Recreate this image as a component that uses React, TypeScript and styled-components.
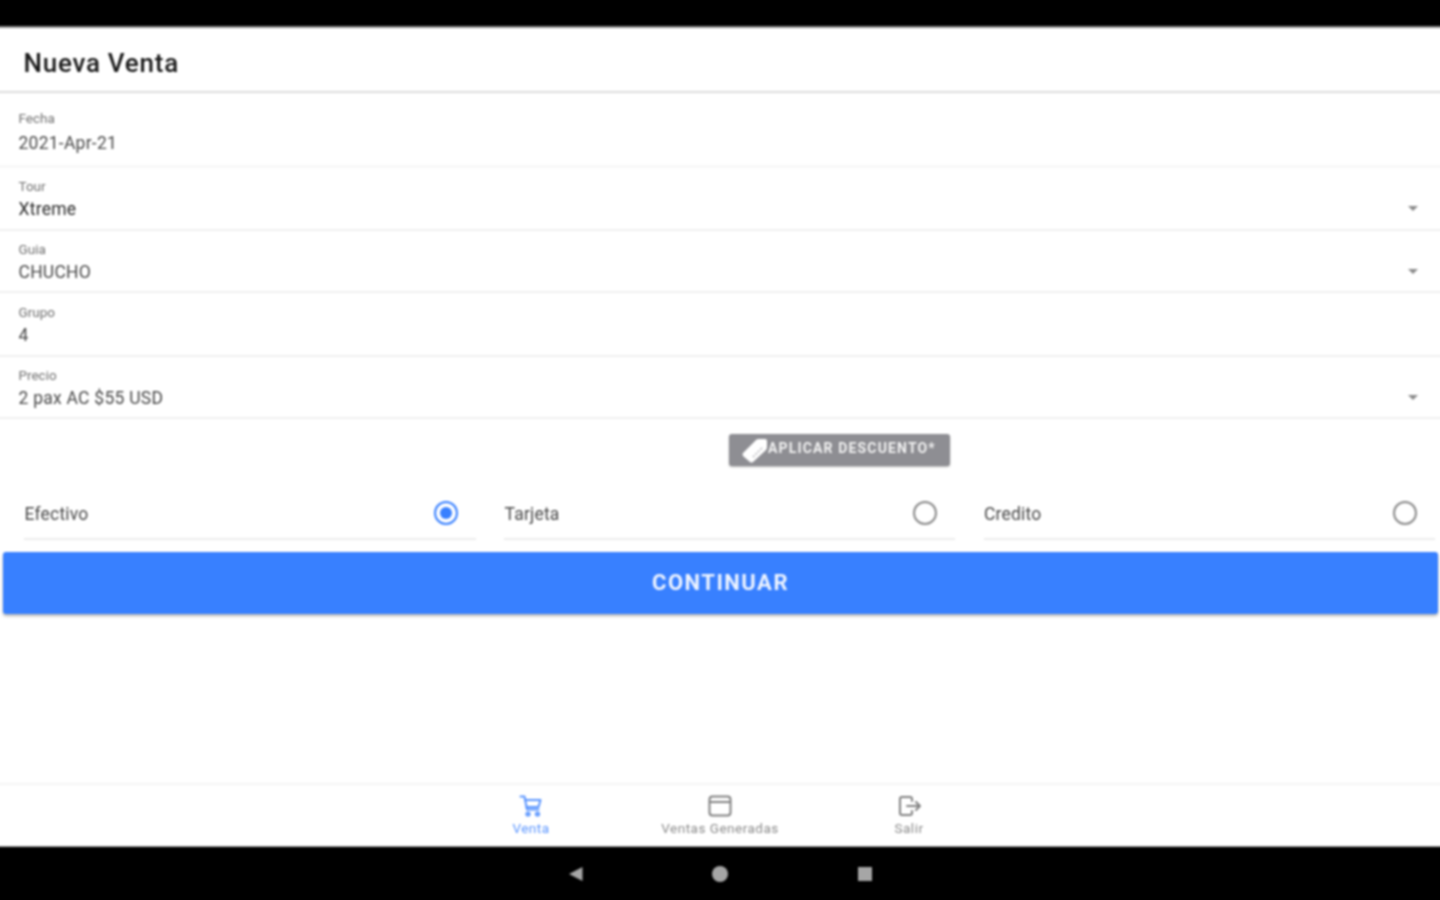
import React from "react";
import styled, { createGlobalStyle } from "styled-components";

const Global = createGlobalStyle`
  html, body { margin: 0; padding: 0; background: #fff; overflow: hidden; }
  * { box-sizing: border-box; }
`;

const Viewport = styled.div`
  width: 1440px;
  height: 900px;
  overflow: hidden;
`;

/* The soft look of the picture comes from a blur; the sheet overhangs the
   viewport by 20px on each side so the blur does not fade at the edges. */
const Screen = styled.div`
  width: 1480px;
  height: 940px;
  margin: -20px;
  display: flex;
  flex-direction: column;
  background: #fff;
  font-family: Roboto, "Liberation Sans", sans-serif;
  filter: blur(0.8px);
`;

const StatusBar = styled.div`
  height: 48px;
  flex: none;
  background: #000;
  border-bottom: 2px solid #8c8c8c;
`;

const Header = styled.header`
  height: 65px;
  flex: none;
  display: flex;
  align-items: center;
  padding: 7px 0 0 43.5px;
  border-bottom: 2px solid #dcdcdc;
  font-size: 26px;
  font-weight: 500;
  letter-spacing: 0.75px;
  color: #1a1a1a;
`;

const Field = styled.div<{ $h: number; $top: number; $soft?: boolean }>`
  height: ${(p) => p.$h}px;
  flex: none;
  position: relative;
  display: flex;
  flex-direction: column;
  padding: ${(p) => p.$top}px 38px 0 38.5px;
  border-bottom: ${(p) => (p.$soft ? "3px solid #f8f8f8" : "2px solid #f0f0f0")};
`;

const FieldLabel = styled.div`
  font-size: 13.5px;
  line-height: 14px;
  color: #707070;
`;

const FieldValue = styled.div<{ $gap: number; $dark?: boolean }>`
  margin-top: ${(p) => p.$gap}px;
  font-size: 17.5px;
  line-height: 20px;
  letter-spacing: 0.25px;
  color: ${(p) => (p.$dark ? "#2a2a2a" : "#484848")};
`;

const Caret = styled.span`
  position: absolute;
  right: 42px;
  top: 38px;
  width: 0;
  height: 0;
  border-left: 5px solid transparent;
  border-right: 5px solid transparent;
  border-top: 5px solid #8a8a8a;
`;

const DiscountRow = styled.div`
  height: 68px;
  flex: none;
  padding: 15px 0 0 749px;
`;

const DiscountButton = styled.button`
  width: 221px;
  height: 32px;
  display: flex;
  align-items: center;
  padding: 0 0 4px 14px;
  position: relative;
  border: none;
  border-radius: 3px;
  background: #8e8e93;
  box-shadow: 0 1px 2px rgba(0, 0, 0, 0.3);
  color: #f2f2f2;
  font-family: inherit;
  font-size: 14px;
  font-weight: 700;
  letter-spacing: 1.15px;
  white-space: nowrap;
`;

const TagIcon = styled.svg`
  position: absolute;
  left: 11px;
  top: 2px;
`;

const Label = styled.span`
  margin-left: 25px;
`;

const RadioRow = styled.div`
  height: 53px;
  flex: none;
  display: grid;
  grid-template-columns: 451.5px 451px 451px;
  column-gap: 28.5px;
  padding-left: 44px;
`;

const RadioItem = styled.div`
  display: flex;
  align-items: center;
  justify-content: space-between;
  padding: 0 18px 0 0;
  border-bottom: 2px solid #ececec;
  font-size: 17.5px;
  letter-spacing: 0.2px;
  color: #484848;
`;

const RadioText = styled.span`
  margin: 3px 0 0 0.5px;
`;

const RadioCircle = styled.span<{ $on?: boolean }>`
  width: 24px;
  height: 24px;
  border-radius: 50%;
  display: flex;
  align-items: center;
  justify-content: center;
  border: 2px solid ${(p) => (p.$on ? "#3880ff" : "#8a8a8a")};
  &::after {
    content: "";
    width: 12px;
    height: 12px;
    border-radius: 50%;
    background: ${(p) => (p.$on ? "#3880ff" : "transparent")};
  }
`;

const ContinueWrap = styled.div`
  flex: none;
  padding: 12px 22px 0 23px;
`;

const ContinueButton = styled.button`
  width: 100%;
  height: 62px;
  padding: 0 0 2px;
  border: none;
  border-radius: 3px;
  background: #3880ff;
  box-shadow: 0 2px 3px rgba(0, 0, 0, 0.3);
  color: #eef4ff;
  font-family: inherit;
  font-size: 22px;
  font-weight: 700;
  letter-spacing: 1.5px;
`;

const Spacer = styled.div`
  flex: 1;
`;

const TabBar = styled.nav`
  height: 64px;
  flex: none;
  display: flex;
  justify-content: center;
  border-top: 2px solid #f4f4f4;
  border-bottom: 1px solid #999;
`;

const Tab = styled.div<{ $active?: boolean }>`
  width: 189px;
  display: flex;
  flex-direction: column;
  align-items: center;
  padding-top: 9px;
  font-size: 13.5px;
  line-height: 14px;
  letter-spacing: 0.5px;
  white-space: nowrap;
  color: ${(p) => (p.$active ? "#5a95ff" : "#8a8a8a")};
  svg { display: block; margin-bottom: 3px; }
`;

const NavBar = styled.div`
  height: 73px;
  flex: none;
  padding-bottom: 20px;
  background: #000;
  display: flex;
  align-items: center;
  justify-content: center;
`;

const NavSlot = styled.div`
  width: 144.5px;
  display: flex;
  justify-content: center;
`;

const Cart = () => (
  <svg width="24" height="24" viewBox="0 0 24 24" fill="none" stroke="#5a95ff" strokeWidth="2" strokeLinejoin="round" strokeLinecap="round">
    <path d="M1.5 2.5h4l2.5 13h11.5" />
    <path d="M6 6h15.5l-2 7H7.5" />
    <circle cx="9" cy="20" r="1.6" />
    <circle cx="18.5" cy="20" r="1.6" />
  </svg>
);

const Card = () => (
  <svg width="24" height="24" viewBox="0 0 24 24" fill="none" stroke="#808080" strokeWidth="2">
    <rect x="1.5" y="2.5" width="21" height="19" rx="3" />
    <path d="M1.5 8h21" />
  </svg>
);

const Exit = () => (
  <svg width="24" height="24" viewBox="0 0 24 24" fill="none" stroke="#808080" strokeWidth="2" strokeLinecap="round" strokeLinejoin="round">
    <path d="M15 7V5a2 2 0 0 0-2-2H5a2 2 0 0 0-2 2v14a2 2 0 0 0 2 2h8a2 2 0 0 0 2-2v-2" />
    <path d="M10 12h13M19 8l4 4-4 4" />
  </svg>
);

export default function App() {
  return (
    <Viewport>
      <Global />
      <Screen>
        <StatusBar />
        <Header>Nueva Venta</Header>
        <Field $h={75} $top={18} $soft>
          <FieldLabel>Fecha</FieldLabel>
          <FieldValue $gap={8}>2021-Apr-21</FieldValue>
        </Field>
        <Field $h={63} $top={11}>
          <FieldLabel>Tour</FieldLabel>
          <FieldValue $gap={6} $dark>Xtreme</FieldValue>
          <Caret />
        </Field>
        <Field $h={62} $top={11}>
          <FieldLabel>Guia</FieldLabel>
          <FieldValue $gap={6}>CHUCHO</FieldValue>
          <Caret />
        </Field>
        <Field $h={64} $top={12}>
          <FieldLabel>Grupo</FieldLabel>
          <FieldValue $gap={6}>4</FieldValue>
        </Field>
        <Field $h={62} $top={11}>
          <FieldLabel>Precio</FieldLabel>
          <FieldValue $gap={6}>2 pax AC $55 USD</FieldValue>
          <Caret />
        </Field>
        <DiscountRow>
          <DiscountButton>
            <TagIcon width="30" height="28" viewBox="0 0 30 28">
              <path d="M3 17 L16 4 Q17 3 19 3 L25 3 Q27 3 27 5 L27 11 Q27 13 26 14 L13 26 Q11 27 10 26 L3 20 Q2 18 3 17 Z" fill="#fff" />
              <path d="M13 21 L23 11" stroke="#c4c4c8" strokeWidth="2" strokeDasharray="2 1.5" fill="none" />
            </TagIcon>
            <Label>APLICAR DESCUENTO*</Label>
          </DiscountButton>
        </DiscountRow>
        <RadioRow>
          <RadioItem><RadioText>Efectivo</RadioText><RadioCircle $on /></RadioItem>
          <RadioItem><RadioText>Tarjeta</RadioText><RadioCircle /></RadioItem>
          <RadioItem><RadioText>Credito</RadioText><RadioCircle /></RadioItem>
        </RadioRow>
        <ContinueWrap>
          <ContinueButton>CONTINUAR</ContinueButton>
        </ContinueWrap>
        <Spacer />
        <TabBar>
          <Tab $active><Cart />Venta</Tab>
          <Tab><Card />Ventas Generadas</Tab>
          <Tab><Exit />Salir</Tab>
        </TabBar>
        <NavBar>
          <NavSlot>
            <svg width="16" height="16" viewBox="0 0 16 16"><path d="M14.5 1v14L1 8z" fill="#a6a6a6" /></svg>
          </NavSlot>
          <NavSlot>
            <svg width="18" height="18" viewBox="0 0 18 18"><circle cx="9" cy="9" r="8" fill="#a6a6a6" /></svg>
          </NavSlot>
          <NavSlot>
            <svg width="16" height="16" viewBox="0 0 16 16"><rect x="1" y="1" width="14" height="14" fill="#a6a6a6" /></svg>
          </NavSlot>
        </NavBar>
      </Screen>
    </Viewport>
  );
}
